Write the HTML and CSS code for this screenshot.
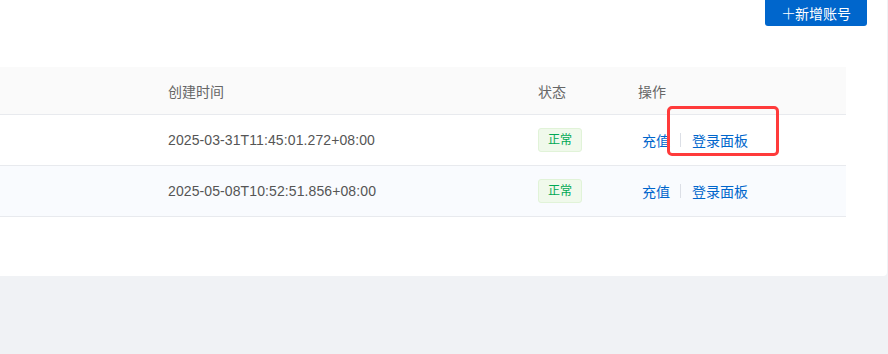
FILE: index.html
```html
<!DOCTYPE html>
<html>
<head>
	<title>账号管理</title>
	<meta charset="utf-8">
	<meta name="viewport" content="width=device-width, initial-scale=1">
	<link rel="stylesheet" href="styles.css">
</head>
<body>
    <div class="card">
        <div class="toolbar">
            <button class="btn-add"><span class="plus">＋</span>新增账号</button>
        </div>

        <div class="table">
            <div class="row head">
                <div class="cell"></div>
                <div class="cell">创建时间</div>
                <div class="cell">状态</div>
                <div class="cell">操作</div>
            </div>
            <div class="row">
                <div class="cell"></div>
                <div class="cell time">2025-03-31T11:45:01.272+08:00</div>
                <div class="cell"><span class="tag">正常</span></div>
                <div class="cell ops">
                    <a class="link">充值</a><span class="divider"></span><a class="link">登录面板</a>
                </div>
            </div>
            <div class="row hover">
                <div class="cell"></div>
                <div class="cell time">2025-05-08T10:52:51.856+08:00</div>
                <div class="cell"><span class="tag">正常</span></div>
                <div class="cell ops">
                    <a class="link">充值</a><span class="divider"></span><a class="link">登录面板</a>
                </div>
            </div>
        </div>

        <!-- 标注框 -->
        <div class="mark"></div>
    </div>
</body>
</html>
```

FILE: styles.css
```css
		body {
			font-family: "Liberation Sans", "Noto Sans CJK SC", sans-serif;
			font-size: 14px;
			background-color: #f0f2f5;
			margin: 0;
			padding: 0;
			color: #555;
		}
		.card {
			position: relative;
			background: #fff;
			width: 887px;
			height: 276px;
			border-radius: 0 0 4px 0;
			overflow: hidden;
		}
		.toolbar {
			display: flex;
			justify-content: flex-end;
			padding-right: 20px;
			margin-top: -6px;
		}
		.btn-add {
			background-color: #0066cc;
			color: #fff;
			border: none;
			border-radius: 3px;
			height: 32px;
			width: 102px;
			padding: 5px 0 0 0;
			font-family: inherit;
			font-size: 14px;
			display: flex;
			align-items: center;
			justify-content: center;
			cursor: pointer;
		}
		.plus {
			font-family: "Noto Sans CJK SC", sans-serif;
			font-size: 15px;
			font-weight: 300;
			margin-right: -1px;
		}
		.table {
			margin-top: 41px;
			width: 846px;
		}
		.row {
			display: grid;
			grid-template-columns: 152px 370px 100px 1fr;
			height: 50px;
			align-items: center;
			border-bottom: 1px solid #e8eaee;
		}
		.row.head {
			height: 47px;
			background: #fafafa;
			color: #666;
		}
		.row.hover {
			background: #f9fbfe;
		}
		.cell {
			padding-left: 16px;
		}
		.time {
			letter-spacing: 0.1px;
		}
		.tag {
			display: inline-block;
			height: 22px;
			line-height: 22px;
			padding: 0 9px;
			font-size: 12px;
			color: #00a854;
			background: #f0f9eb;
			border: 1px solid #e1f3d8;
			border-radius: 3px;
		}
		.ops {
			display: flex;
			align-items: center;
		}
		.link {
			color: #0066cc;
			padding: 0 4px;
			cursor: pointer;
		}
		.divider {
			width: 1px;
			height: 14px;
			background: #dcdfe6;
			margin: 0 7px 0 6px;
		}
		.mark {
			position: absolute;
			left: 667px;
			top: 106px;
			width: 106px;
			height: 44px;
			border: 3px solid #ff3b3b;
			border-radius: 5px;
		}
```
